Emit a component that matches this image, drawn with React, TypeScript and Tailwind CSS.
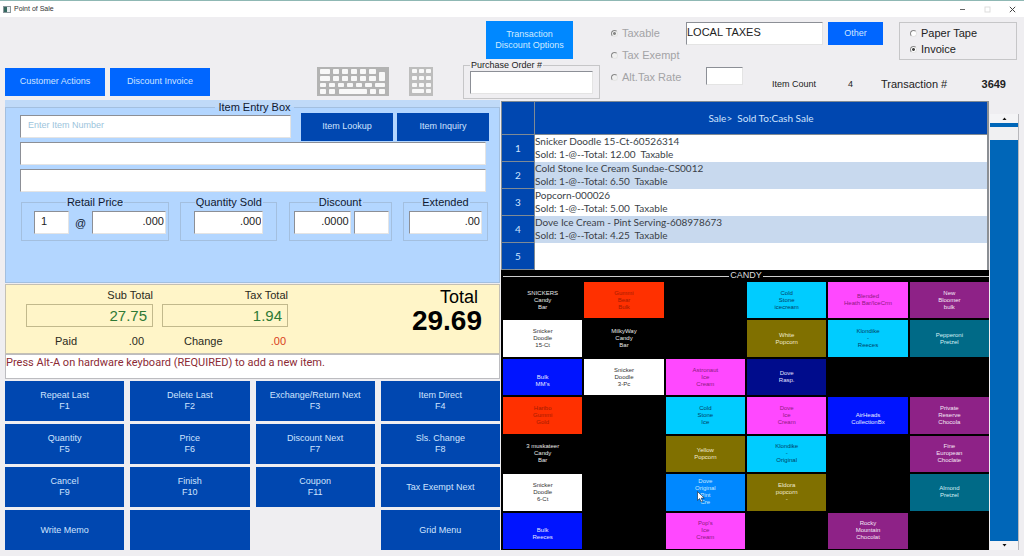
import React, { useState } from 'react';
import clsx from 'clsx';

const SUNKEN = 'border border-t-[#8c8f96] border-l-[#8c8f96] border-r-[#e4e4e4] border-b-[#e4e4e4] bg-white outline-none';
const GROUP = 'min-w-0 border border-[#a3bfdf]';

const tileColors = {
  black: 'bg-black text-[#e8e8e8]',
  white: 'bg-white text-[#333333]',
  red: 'bg-[#ff3000] text-[#a51c00]',
  pink: 'bg-[#ff48ff] text-[#8c1a80]',
  cyan: 'bg-[#00ccff] text-[#003f66]',
  olive: 'bg-[#807000] text-[#f0ead0]',
  purple: 'bg-[#8e2287] text-[#f5e6f5]',
  teal: 'bg-[#006a87] text-[#d8f0f5]',
  navy: 'bg-[#000c8c] text-[#e0e0ff]',
  blue: 'bg-[#0014ff] text-[#e8e8ff]',
  sky: 'bg-[#0088ff] text-[#c8e8ff]'
};

interface Tile {
  color: keyof typeof tileColors;
  lines: string[];
  hovered?: boolean;
}

// seven rows of six, null is an unassigned slot
const tiles: (Tile | null)[] = [
  { color: 'black', lines: ['SNICKERS', 'Candy', 'Bar'] },
  { color: 'red', lines: ['Gummi', 'Bear', 'Bulk'] },
  null,
  { color: 'cyan', lines: ['Cold', 'Stone', 'icecream'] },
  { color: 'pink', lines: ['Blended', 'Heath Bar/IceCrm'] },
  { color: 'purple', lines: ['New', 'Bloomer', 'bulk'] },

  { color: 'white', lines: ['Snicker', 'Doodle', '15-Ct'] },
  { color: 'black', lines: ['MilkyWay', 'Candy', 'Bar'] },
  null,
  { color: 'olive', lines: ['White', 'Popcorn'] },
  { color: 'cyan', lines: ['Klondike', '-', 'Reeces'] },
  { color: 'teal', lines: ['Pepperoni', 'Pretzel'] },

  { color: 'blue', lines: ['', 'Bulk', 'MM\'s'] },
  { color: 'white', lines: ['Snicker', 'Doodle', '3-Pc'] },
  { color: 'pink', lines: ['Astronaut', 'Ice', 'Cream'] },
  { color: 'navy', lines: ['Dove', 'Rasp.'] },
  null,
  null,

  { color: 'red', lines: ['Haribo', 'Gummi', 'Gold'] },
  null,
  { color: 'cyan', lines: ['Cold', 'Stone', 'Ice'] },
  { color: 'pink', lines: ['Dove', 'Ice', 'Cream'] },
  { color: 'blue', lines: ['', 'AirHeads', 'CollectionBx'] },
  { color: 'purple', lines: ['Private', 'Reserve', 'Chocola'] },

  { color: 'black', lines: ['3 muskateer', 'Candy', 'Bar'] },
  null,
  { color: 'olive', lines: ['Yellow', 'Popcorn'] },
  { color: 'cyan', lines: ['Klondike', '-', 'Original'] },
  null,
  { color: 'purple', lines: ['Fine', 'European', 'Choclate'] },

  { color: 'white', lines: ['Snicker', 'Doodle', '6-Ct'] },
  null,
  { color: 'sky', lines: ['Dove', 'Original', 'Pint', 'Cre'], hovered: true },
  { color: 'olive', lines: ['Eldora', 'popcorn', '-'] },
  null,
  { color: 'teal', lines: ['Almond', 'Pretzel'] },

  { color: 'blue', lines: ['', 'Bulk', 'Reeces'] },
  null,
  { color: 'pink', lines: ['Pop\'s', 'Ice', 'Cream'] },
  null,
  { color: 'purple', lines: ['Rocky', 'Mountain', 'Chocolat'] },
  null
];

const saleRows = [
  { name: 'Snicker Doodle 15-Ct-60526314', sold: 'Sold: 1-@--Total: 12.00  Taxable' },
  { name: 'Cold Stone Ice Cream Sundae-CS0012', sold: 'Sold: 1-@--Total: 6.50  Taxable' },
  { name: 'Popcorn-000026', sold: 'Sold: 1-@--Total: 5.00  Taxable' },
  { name: 'Dove Ice Cream - Pint Serving-608978673', sold: 'Sold: 1-@--Total: 4.25  Taxable' },
  { name: '', sold: '' }
];

const actions: (string[] | null)[] = [
  ['Repeat Last', 'F1'], ['Delete Last', 'F2'], ['Exchange/Return Next', 'F3'], ['Item Direct', 'F4'],
  ['Quantity', 'F5'], ['Price', 'F6'], ['Discount Next', 'F7'], ['Sls. Change', 'F8'],
  ['Cancel', 'F9'], ['Finish', 'F10'], ['Coupon', 'F11'], ['Tax Exempt Next'],
  ['Write Memo'], [], null, ['Grid Menu']
];

const TitleBar = () => {
  return <div className="flex h-[17px] items-center border-t border-[#8fb8b4] bg-white pl-[3px] pr-[7px]">
      <svg width="8" height="7" viewBox="0 0 8 7">
        <rect x="0.5" y="0.5" width="7" height="6" fill="#e8eef0" stroke="#8a979c" />
        <rect x="1" y="1" width="3" height="5" fill="#35685f" />
      </svg>
      <span className="ml-[3px] text-[7px] text-[#333333]">Point of Sale</span>
      <div className="ml-auto flex gap-[16px]">
        <button aria-label="Minimize" className="flex size-[9px] items-center justify-center">
          <svg width="7" height="7" viewBox="0 0 7 7" stroke="#666"><path d="M1 3.5h5" /></svg>
        </button>
        <button aria-label="Maximize" disabled className="flex size-[9px] items-center justify-center">
          <svg width="7" height="7" viewBox="0 0 7 7" stroke="#dddddd" fill="none"><rect x="1" y="1" width="5" height="5" /></svg>
        </button>
        <button aria-label="Close" className="flex size-[9px] items-center justify-center">
          <svg width="7" height="7" viewBox="0 0 7 7" stroke="#444"><path d="M0.8 0.8l5.4 5.4M6.2 0.8L0.8 6.2" /></svg>
        </button>
      </div>
    </div>;
};

const KeyboardIcon = () => {
  const keys = [
    [3, 2, 10, 5], [16, 2, 6, 5], [25, 2, 6, 5], [34, 2, 6, 5], [43, 2, 6, 5], [52, 2, 7, 5],
    [3, 9, 10, 5], [16, 9, 6, 5], [25, 9, 6, 5], [34, 9, 6, 5], [43, 9, 6, 5], [52, 9, 7, 5], [62, 5, 6, 9],
    [3, 16, 6, 4], [12, 16, 6, 4], [21, 16, 6, 4], [30, 16, 6, 4], [39, 16, 6, 4], [48, 16, 7, 4], [58, 16, 10, 4],
    [3, 22, 6, 5], [12, 22, 6, 5], [22, 22, 28, 5], [53, 22, 6, 5], [62, 22, 6, 5]
  ];
  return <svg width="72" height="29" viewBox="0 0 72 29">
      <rect width="72" height="29" fill="#b3b3b3" />
      {keys.map(([x, y, w, h]) => <rect key={`${x}-${y}`} x={x} y={y} width={w} height={h} rx="0.8" fill="#f8f8f8" />)}
    </svg>;
};

const NumpadIcon = () => {
  const keys = [
    [3, 2, 5], [10, 2, 5], [17, 2, 5],
    [3, 9, 5], [10, 9, 5], [17, 9, 5],
    [3, 16, 5], [10, 16, 5], [17, 16, 5],
    [3, 22, 12], [17, 22, 5]
  ];
  return <svg width="24" height="29" viewBox="0 0 24 29">
      <rect width="24" height="29" fill="#bdbdbd" />
      {keys.map(([x, y, w]) => <rect key={`${x}-${y}`} x={x} y={y} width={w} height="4" rx="0.8" fill="#f8f8f8" />)}
    </svg>;
};

interface RadioProps {
  name: string;
  label: string;
  checked: boolean;
  disabled?: boolean;
  onChange?: () => void;
  className?: string;
}
const Radio = ({ name, label, checked, disabled, onChange, className }: RadioProps) => {
  return <label className={clsx('flex items-center gap-[4px] whitespace-nowrap text-[11px]', disabled ? 'text-[#a3a3a6]' : 'text-[#222222]', className)}>
      <input type="radio" name={name} checked={checked} disabled={disabled} onChange={onChange || (() => {})} className="size-[7px] shrink-0 appearance-none rounded-full border border-t-[#888888] border-l-[#888888] border-r-[#e4e4e4] border-b-[#e4e4e4] bg-white checked:bg-[radial-gradient(circle,#444444_35%,white_45%)] disabled:bg-[#f0f0f0] disabled:checked:bg-[radial-gradient(circle,#888888_35%,#f0f0f0_45%)]" />
      {label}
    </label>;
};

const Header = () => {
  const [output, setOutput] = useState('invoice');
  return <header className="flex h-[83px] pl-[5px] pr-[7px]">
      <div className="flex flex-1 items-end gap-[5px] pb-[4px] text-[9px] text-[#cfe4ff]">
        <button className="h-[28px] w-[100px] bg-[#0066ff]">Customer Actions</button>
        <button className="h-[28px] w-[100px] bg-[#0066ff]">Discount Invoice</button>
        <div className="ml-auto flex gap-[20px]">
          <button aria-label="Show keyboard"><KeyboardIcon /></button>
          <button aria-label="Show number pad"><NumpadIcon /></button>
        </div>
      </div>
      <div className="ml-[30px] flex w-[137px] flex-col pt-[4px]">
        <button className="ml-[23px] h-[38px] w-[87px] bg-[#0088ff] text-[9px] leading-[11px] text-[#cfeaff]">
          Transaction<br />Discount Options
        </button>
        <fieldset className="h-[40px] w-full border border-[#c6c6c8] px-[6px]">
          <legend className="px-[1px] text-[9px] leading-[12px] text-[#222222]">Purchase Order #</legend>
          <input aria-label="Purchase Order #" className={clsx(SUNKEN, 'block h-[23px] w-full px-1 text-[11px]')} />
        </fieldset>
      </div>
      <div className="ml-[11px] flex w-[406px] pt-[5px]">
        <div className="w-[75px]">
          <Radio name="tax" label="Taxable" checked disabled className="h-[22px]" />
          <Radio name="tax" label="Tax Exempt" checked={false} disabled className="h-[22px]" />
          <Radio name="tax" label="Alt.Tax Rate" checked={false} disabled className="h-[22px]" />
        </div>
        <div className="flex-1">
          <div className="flex h-[38px] items-start">
            <input aria-label="Tax name" defaultValue="LOCAL TAXES" className={clsx(SUNKEN, 'h-[23px] w-[137px] pb-[4px] text-[11px] text-[#222222]')} />
            <button className="ml-[5px] h-[23px] w-[55px] bg-[#0066ff] text-[9px] text-[#cfe4ff]">Other</button>
            <div role="radiogroup" aria-label="Output" className="ml-auto h-[38px] w-[118px] border border-[#c6c6c8] pl-[10px] pt-[2px]">
              <Radio name="output" label="Paper Tape" checked={output === 'paper'} onChange={() => setOutput('paper')} className="h-[16px]" />
              <Radio name="output" label="Invoice" checked={output === 'invoice'} onChange={() => setOutput('invoice')} className="h-[16px]" />
            </div>
          </div>
          <div className="mt-[7px] flex h-[24px] items-end pr-[11px] leading-[14px] text-[#222222]">
            <input aria-label="Alt tax rate" className={clsx(SUNKEN, 'ml-[20px] h-[18px] w-[37px] self-start text-[9px]')} />
            <span className="ml-[29px] w-[76px] text-[9px]">Item Count</span>
            <span className="w-[33px] text-[9px]">4</span>
            <span className="text-[11px]">Transaction #</span>
            <span className="ml-auto text-[11px] font-bold">3649</span>
          </div>
        </div>
      </div>
    </header>;
};

interface AmountProps {
  label: string;
  value: string;
  className?: string;
}
const Amount = ({ label, value, className }: AmountProps) => {
  return <input aria-label={label} defaultValue={value} className={clsx(SUNKEN, 'block h-[23px] pb-[4px] pr-[1px] text-right text-[11px] text-[#222222]', className)} />;
};

const ItemEntry = () => {
  return <section className="h-[183px] bg-[#c0daf8] pt-[1px]">
      <fieldset className={clsx(GROUP, 'h-full bg-[#b3d6ff] pl-[14px] pr-[10px]')}>
        <legend className="mx-auto px-[3px] text-[11px] leading-[12px] text-[#101830]">Item Entry Box</legend>
        <div className="flex">
          <input placeholder="Enter Item Number" aria-label="Item Number" className={clsx(SUNKEN, 'mt-[2px] h-[23px] flex-1 px-[7px] pb-[3px] text-[9px] placeholder:text-[#9cc4dc]')} />
          <button className="ml-[10px] h-[28px] w-[92px] bg-[#0047b0] text-[9px] text-[#cfe4ff]">Item Lookup</button>
          <button className="ml-[4px] h-[28px] w-[92px] bg-[#0047b0] text-[9px] text-[#cfe4ff]">Item Inquiry</button>
        </div>
        <div className="mt-[1px] flex flex-col gap-[4px] pr-[3px]">
          <input aria-label="Item description" className={clsx(SUNKEN, 'h-[23px] w-full px-1 text-[11px]')} />
          <input aria-label="Item notes" className={clsx(SUNKEN, 'h-[23px] w-full px-1 text-[11px]')} />
        </div>
        <div className="mt-[4px] flex justify-between pl-px pr-px text-[11px] leading-[12px] whitespace-nowrap text-[#101830]">
          <fieldset className={clsx(GROUP, 'h-[45px] w-[148px] px-0')}>
            <legend className="mx-auto px-px">Retail Price</legend>
            <div className="flex items-center justify-between pt-[3px] pl-[12px] pr-[2px]">
              <input aria-label="Price quantity" defaultValue="1" className={clsx(SUNKEN, 'h-[23px] w-[35px] pb-[4px] pl-[6px] text-[#222222]')} />
              <span>@</span>
              <Amount label="Retail Price" value=".000" className="w-[74px]" />
            </div>
          </fieldset>
          <fieldset className={clsx(GROUP, 'h-[45px] w-[97px] px-0')}>
            <legend className="mx-auto px-px">Quantity Sold</legend>
            <div className="px-[13px] pt-[3px]">
              <Amount label="Quantity Sold" value=".000" className="w-full" />
            </div>
          </fieldset>
          <fieldset className={clsx(GROUP, 'h-[45px] w-[103px] px-0')}>
            <legend className="mx-auto px-px">Discount</legend>
            <div className="flex justify-end gap-[3px] pt-[3px] pr-[2px]">
              <Amount label="Discount" value=".0000" className="w-[57px]" />
              <Amount label="Discount type" value="" className="w-[35px]" />
            </div>
          </fieldset>
          <fieldset className={clsx(GROUP, 'h-[45px] w-[85px] px-0')}>
            <legend className="mx-auto px-px">Extended</legend>
            <div className="px-[5px] pt-[3px]">
              <Amount label="Extended" value=".00" className="w-full" />
            </div>
          </fieldset>
        </div>
      </fieldset>
    </section>;
};

const Totals = () => {
  return <section className="mt-px flex h-[70px] justify-between border border-[#c4c0b4] bg-[#fff5c8] pl-[20px] pr-[17px] text-[11px] text-[#2a2a20]">
      <div className="flex gap-[9px] pt-[2px]">
        <div className="w-[127px]">
          <div className="text-right leading-[17px]">Sub Total</div>
          <div className="h-[23px] border border-[#c2b98c] pr-[5px] text-right text-[15px] leading-[21px] text-[#2f7a35]">27.75</div>
          <div className="mt-[6px] flex justify-between pl-[29px] pr-[9px] leading-[17px]"><span>Paid</span><span>.00</span></div>
        </div>
        <div className="w-[126px]">
          <div className="text-right leading-[17px]">Tax Total</div>
          <div className="h-[23px] border border-[#c2b98c] pr-[5px] text-right text-[15px] leading-[21px] text-[#2f7a35]">1.94</div>
          <div className="mt-[6px] flex justify-between pl-[22px] pr-[2px] leading-[17px]"><span>Change</span><span className="text-[#d8401c]">.00</span></div>
        </div>
      </div>
      <div className="pt-[3px] text-right text-black">
        <div className="pr-[4px] text-[18px] leading-[18px]">Total</div>
        <div className="text-[28px] leading-[30px] font-bold">29.69</div>
      </div>
    </section>;
};

const ActionGrid = () => {
  return <div className="mt-[2px] grid flex-1 grid-cols-4 grid-rows-4 gap-x-[6px] gap-y-[3px]">
      {actions.map((lines, i) => lines ? <button key={i} aria-label={lines.length ? undefined : 'Unassigned'} className="bg-[#0047b0] text-[9px] leading-[11px] text-[#cfe4ff]">
          {lines.map(line => <span key={line} className="block">{line}</span>)}
        </button> : <div key={i} />)}
    </div>;
};

const SaleTable = () => {
  return <table className="w-full table-fixed border-collapse border-t border-r-2 border-[#8b8f94] font-['Lato',sans-serif] text-[10px]">
      <thead>
        <tr className="h-[33px] bg-[#0047b0] text-[#cfe4ff]">
          <th aria-label="Line" className="w-[33px] border border-[#7f8a94]"></th>
          <th className="border border-[#7f8a94] font-normal whitespace-pre">Sale&gt;  Sold To:Cash Sale</th>
        </tr>
      </thead>
      <tbody>
        {saleRows.map((row, i) => <tr key={i} className={clsx('h-[27px]', i % 2 ? 'bg-[#c8d9ee]' : 'bg-white')}>
            <th className="border border-[#7f8a94] bg-[#0047b0] p-0 font-normal text-[#cfe4ff]">{i + 1}</th>
            <td className="overflow-hidden p-0 leading-[13px] whitespace-pre text-[#3a3f48]">
              <div>{row.name}</div>
              <div>{row.sold}</div>
            </td>
          </tr>)}
      </tbody>
    </table>;
};

const CandyGrid = () => {
  return <section className="flex flex-1 flex-col bg-black pb-px pl-[2px]">
      <h2 className="flex h-[12px] items-center gap-px text-[9px] text-[#dddddd]">
        <span className="h-px flex-1 bg-[#cccccc]" />
        CANDY
        <span className="h-px flex-1 bg-[#cccccc]" />
      </h2>
      <div className="grid flex-1 grid-cols-6 grid-rows-7 gap-[2px]">
        {tiles.map((tile, i) => tile ? <button key={i} className={clsx('relative min-h-0 text-[6px] leading-[7px]', tileColors[tile.color])}>
            {tile.lines.map((line, n) => <span key={n} className="block min-h-[7px]">{line}</span>)}
            {tile.hovered && <svg className="absolute left-[31px] top-[17px]" width="8" height="12" viewBox="0 0 8 12">
                <path d="M0.5 0.5v9l2.1-1.9 1.5 3.4 1.5-.7-1.4-3.2h3z" fill="white" stroke="#1b3350" strokeWidth="0.7" />
              </svg>}
          </button> : <div key={i} />)}
      </div>
    </section>;
};

const ScrollBar = () => {
  return <div className="mt-[14px] mr-[5px] flex flex-col border-r border-[#b8b8bc] bg-[#0066b8]">
      <button aria-label="Scroll up" className="flex h-[9px] items-center justify-center bg-[#f4f4f6]">
        <svg width="5" height="3" viewBox="0 0 5 3"><path d="M0.5 3L2.5 0.5L4.5 3z" fill="#111" /></svg>
      </button>
      <div className="mt-[4px] h-[13px] bg-[#f0f0f2]" />
      <button aria-label="Scroll down" className="mt-auto flex h-[9px] items-center justify-center bg-[#f4f4f6]">
        <svg width="5" height="3" viewBox="0 0 5 3"><path d="M0.5 0L2.5 2.5L4.5 0z" fill="#111" /></svg>
      </button>
    </div>;
};

const App = () => {
  return <div className="flex min-h-screen flex-col bg-[#efeef1] font-['Liberation_Sans',Arial,sans-serif]">
      <TitleBar />
      <Header />
      <main className="grid flex-1 grid-cols-[495fr_488fr_34px] gap-x-px pb-[6px] pl-[5px]">
        <div className="flex flex-col">
          <ItemEntry />
          <Totals />
          <p className="h-[25px] border border-[#bcbcc0] bg-white font-['Roboto',sans-serif] text-[11px] leading-[15px] text-[#8c2a34]">
            Press Alt-A on hardware keyboard (REQUIRED) to add a new item.
          </p>
          <ActionGrid />
        </div>
        <div className="flex flex-col pt-px">
          <SaleTable />
          <CandyGrid />
        </div>
        <ScrollBar />
      </main>
    </div>;
};
export default App;
